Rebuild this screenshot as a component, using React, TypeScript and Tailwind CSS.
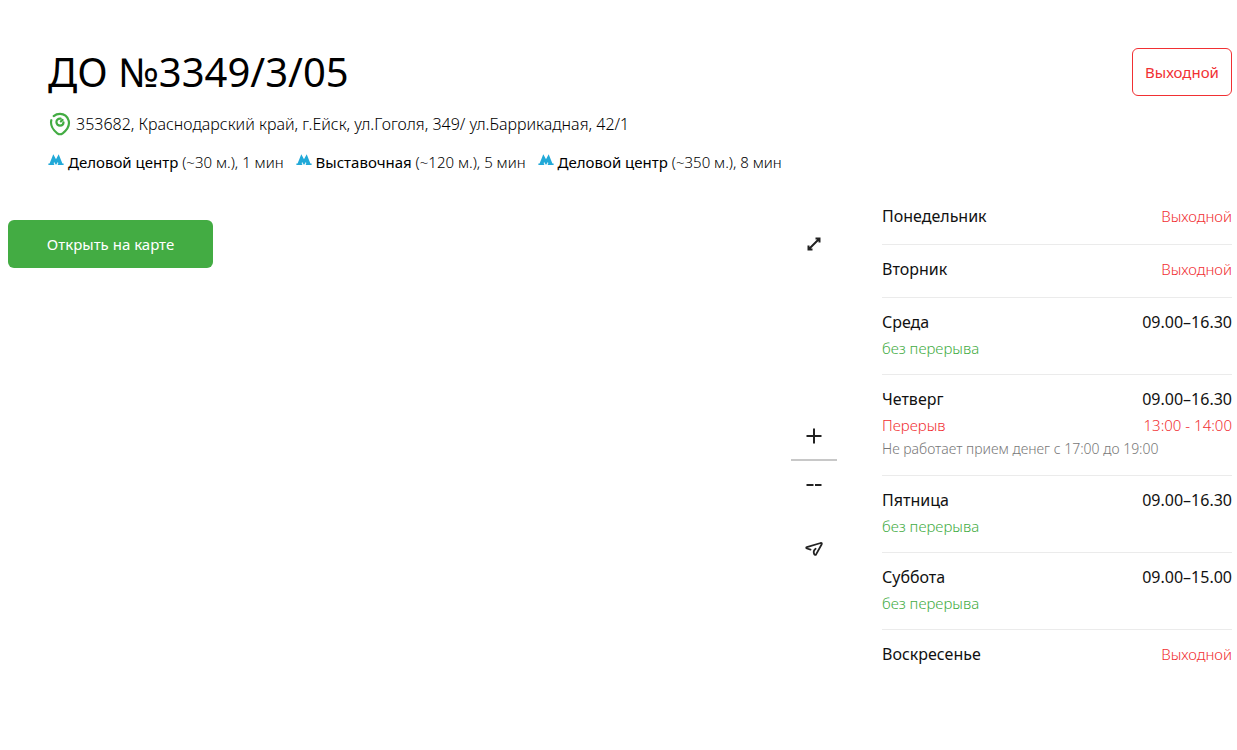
import React from "react";

type Day = {
  name: string;
  hours?: string;
  pause?: string;
  note?: string;
};

type Station = { name: string; distance: string };

const stations: Station[] = [
  { name: "Деловой центр", distance: "(~30 м.), 1 мин" },
  { name: "Выставочная", distance: "(~120 м.), 5 мин" },
  { name: "Деловой центр", distance: "(~350 м.), 8 мин" },
];

const days: Day[] = [
  { name: "Понедельник" },
  { name: "Вторник" },
  { name: "Среда", hours: "09.00–16.30" },
  {
    name: "Четверг",
    hours: "09.00–16.30",
    pause: "13:00 - 14:00",
    note: "Не работает прием денег с 17:00 до 19:00",
  },
  { name: "Пятница", hours: "09.00–16.30" },
  { name: "Суббота", hours: "09.00–15.00" },
  { name: "Воскресенье" },
];

function PinIcon() {
  return (
    <svg className="size-6 shrink-0" viewBox="0 0 24 24" fill="none" stroke="#43ac43" strokeWidth="2.2" strokeLinecap="round" aria-hidden="true">
      <path d="M3.3 8.200C2.200 13 5 18.200 9.300 21.300c1.700 1.200 3.700 1.200 5.400 0C19 18 21.700 13 20.700 8.700 19.400 4.300 15.700 1.900 12 1.900c-2.300 0-4.500.7-6.300 2.200" />
      <path d="M12.700 6.700c-2.300-.4-4.300 1.100-4.300 3.400 0 2 1.600 3.500 3.600 3.500 2.100 0 3.500-1.500 3.500-3.300" />
      <path d="M12.900 9.400 14.600 7.900" />
    </svg>
  );
}

function MetroIcon() {
  return (
    <svg className="mt-0.5 h-3 w-4 shrink-0" viewBox="0 0 16 12" fill="#21a9d8" aria-hidden="true">
      <path d="M5.300.2 8 5.200 10.700.2l3.700 9.400h1.200V11H9.800V9.600h.6l-.5-1.500L8 11 6.100 8.100l-.5 1.500h.6V11H.4V9.600h1.200z" />
    </svg>
  );
}

function ExpandIcon() {
  return (
    <svg className="size-4" viewBox="0 0 16 16" fill="none" stroke="#222" strokeWidth="2" aria-hidden="true">
      <path d="M9.500 2.500h4v4M6.500 13.500h-4v-4M13.500 2.500l-11 11" />
    </svg>
  );
}

function LocateIcon() {
  return (
    <svg className="size-5" viewBox="0 0 20 20" fill="none" stroke="#222" strokeWidth="1.800" strokeLinecap="round" strokeLinejoin="round" aria-hidden="true">
      <path d="M6.600 10.600 2.900 9.500c-.9-.3-.9-1.100 0-1.400L16.700 4c.9-.2 1.400.3 1 1.200L12.100 15.400c-.5.8-1.400.7-1.800-.1-1-2.100-.7-4.100 1.300-5.600" />
    </svg>
  );
}

export default function App() {
  return (
    <main className="bg-white pr-[5px] pb-12 pl-2 font-['Noto_Sans',sans-serif] text-black">
      <header className="flex items-start justify-between pt-12 pl-10">
        <div>
          <h1 className="text-[40px] leading-12 font-normal">ДО №3349/3/05</h1>
          <address className="mt-4 flex items-center gap-1 text-base leading-6 font-light not-italic">
            <PinIcon />
            353682, Краснодарский край, г.Ейск, ул.Гоголя, 349/ ул.Баррикадная, 42/1
          </address>
          <ul className="mt-4 flex flex-wrap gap-x-3 text-[15px] leading-5 font-light">
            {stations.map((s, i) => (
              <li key={i} className="flex items-start gap-1">
                <MetroIcon />
                <span>
                  <span className="font-normal">{s.name}</span> {s.distance}
                </span>
              </li>
            ))}
          </ul>
        </div>
        <p className="flex h-12 w-[100px] items-center justify-center rounded-md border border-[#f13033] text-[15px] leading-5 text-[#f13033]">
          Выходной
        </p>
      </header>

      <div className="mt-5 flex gap-[45px]">
        <section className="flex flex-1 items-start justify-between pt-7" aria-label="Карта">
          <button type="button" className="h-12 w-[205px] rounded-md bg-[#43ac43] text-[15px] leading-5 text-white">
            Открыть на карте
          </button>
          <div className="flex w-[46px] flex-col text-[#222]">
            <button type="button" aria-label="Развернуть" className="flex h-12 items-center justify-center">
              <ExpandIcon />
            </button>
            <button type="button" aria-label="Приблизить" className="mt-[145px] flex h-12 items-center justify-center border-b-2 border-[#c8c8c8]">
              <svg className="size-4" viewBox="0 0 16 16" stroke="#222" strokeWidth="2" aria-hidden="true">
                <path d="M8 .5v15M.5 8h7M9 8h6.500" />
              </svg>
            </button>
            <button type="button" aria-label="Отдалить" className="flex h-12 items-center justify-center">
              <svg className="size-4" viewBox="0 0 16 16" stroke="#222" strokeWidth="2" aria-hidden="true">
                <path d="M.5 8h7M9 8h6.500" />
              </svg>
            </button>
            <button type="button" aria-label="Моё местоположение" className="mt-4 flex h-12 items-center justify-center">
              <LocateIcon />
            </button>
          </div>
        </section>

        <ul className="w-[350px] shrink-0 divide-y divide-[#ebebeb]">
          {days.map((d) => (
            <li key={d.name} className="flex flex-col gap-1 pt-3 pb-4 text-[15px] leading-5 font-light">
              <div className="flex h-6 items-center justify-between text-base leading-6 font-normal text-[#111]">
                <span>{d.name}</span>
                {d.hours ? (
                  <span>{d.hours}</span>
                ) : (
                  <span className="text-[15px] font-light text-[#f13033]">Выходной</span>
                )}
              </div>
              {d.pause && (
                <div className="flex justify-between text-[#f13033]">
                  <span>Перерыв</span>
                  <span>{d.pause}</span>
                </div>
              )}
              {d.hours && !d.pause && <div className="text-[#43ac43]">без перерыва</div>}
              {d.note && <div className="text-sm leading-5 text-[#777]">{d.note}</div>}
            </li>
          ))}
        </ul>
      </div>
    </main>
  );
}
